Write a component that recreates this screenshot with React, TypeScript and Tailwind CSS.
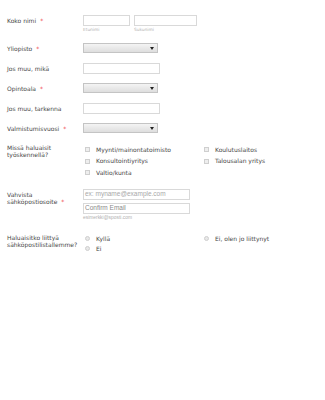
import React from 'react';

const font = { fontFamily: '"DejaVu Sans", Verdana, sans-serif' };

const Req = () => <span className="ml-[4px] text-[6px] text-[#f0424a]">*</span>;

const Label = ({ children, req }: { children: React.ReactNode; req?: boolean }) => (
  <div className="w-[76px] shrink-0 text-[6px] leading-[6.5px] text-[#474747]">
    {children}
    {req && <Req />}
  </div>
);

const TextBox = ({ w, placeholder, dark }: { w: string; placeholder?: string; dark?: boolean }) => (
  <div
    className={`${w} h-[11px] border border-[#d9d9d9] bg-white flex items-center pl-[1px] text-[6.5px] leading-none ${dark ? 'text-[#8a8a8a]' : 'text-[#a8a8a8]'}`}
    style={{ fontFamily: '"Liberation Sans", Arial, sans-serif' }}
  >
    {placeholder}
  </div>
);

const SelectBox = () => (
  <div className="w-[75px] h-[10px] border border-[#c4c4c4] bg-gradient-to-b from-[#f4f4f4] to-[#dedede] flex items-center justify-end pr-[3px]">
    <svg width="4" height="3" viewBox="0 0 4 3">
      <path d="M0 0h4L2 3z" fill="#222" />
    </svg>
  </div>
);

const Check = ({ label }: { label: string }) => (
  <div className="h-[11.5px] flex items-center">
    <div className="w-[5px] h-[5px] border border-[#cfcfcf] bg-[#eeeeee] shrink-0" />
    <span className="ml-[6px] text-[6px] leading-none text-[#474747]">{label}</span>
  </div>
);

const Radio = ({ label }: { label: string }) => (
  <div className="h-[10px] flex items-center">
    <div className="w-[5px] h-[5px] rounded-full border border-[#cfcfcf] bg-[#e8e8e8] shrink-0" />
    <span className="ml-[6px] text-[6px] leading-none text-[#474747]">{label}</span>
  </div>
);

export default function App() {
  return (
    <div className="w-[325px] h-[400px] bg-white pl-[7px] pt-[15px]" style={font}>
      {/* Koko nimi */}
      <div className="flex">
        <div className="w-[76px] shrink-0 h-[11px] flex items-center text-[6px] text-[#474747]">
          Koko nimi<Req />
        </div>
        <div className="flex gap-[4px]">
          <div>
            <TextBox w="w-[47px]" />
            <div className="mt-[1px] text-[4.3px] leading-[5px] text-[#b0b0b0]">Etunimi</div>
          </div>
          <div>
            <TextBox w="w-[63px]" />
            <div className="mt-[1px] text-[4.3px] leading-[5px] text-[#b0b0b0]">Sukunimi</div>
          </div>
        </div>
      </div>

      {/* select / text rows */}
      <div className="mt-[11px]">
        {[
          { l: 'Yliopisto', req: true, sel: true },
          { l: 'Jos muu, mikä', sel: false },
          { l: 'Opintoala', req: true, sel: true },
          { l: 'Jos muu, tarkenna', sel: false },
          { l: 'Valmistumisvuosi', req: true, sel: true },
        ].map((r) => (
          <div key={r.l} className="h-[20px] flex items-start">
            <div className="w-[76px] shrink-0 h-[10px] flex items-center text-[6px] text-[#474747]">
              {r.l}
              {r.req && <Req />}
            </div>
            {r.sel ? <SelectBox /> : <TextBox w="w-[77px]" />}
          </div>
        ))}
      </div>

      {/* checkboxes */}
      <div className="flex mt-[1px]">
        <div className="pt-[1px]">
          <Label>
            Missä haluaisit
            <br />
            työskennellä?
          </Label>
        </div>
        <div className="grid grid-cols-[119px_119px] pl-[2px]">
          <div>
            <Check label="Myynti/mainontatoimisto" />
            <Check label="Konsultointiyritys" />
            <Check label="Valtio/kunta" />
          </div>
          <div>
            <Check label="Koulutuslaitos" />
            <Check label="Talousalan yritys" />
          </div>
        </div>
      </div>

      {/* email */}
      <div className="flex mt-[10px]">
        <div className="pt-[2px]">
          <div className="w-[76px] text-[6px] leading-[7px] text-[#474747]">
            Vahvista
            <br />
            sähköpostiosoite
            <Req />
          </div>
        </div>
        <div>
          <TextBox w="w-[107px]" placeholder="ex: myname@example.com" />
          <div className="mt-[3px]">
            <TextBox w="w-[107px]" placeholder="Confirm Email" dark />
          </div>
          <div
            className="mt-[1px] text-[4.9px] leading-[5px] text-[#b0b0b0]"
            style={{ fontFamily: '"Liberation Sans", Arial, sans-serif' }}
          >
            esimerkki@sposti.com
          </div>
        </div>
      </div>

      {/* radios */}
      <div className="flex mt-[14px]">
        <div>
          <div className="w-[76px] text-[6px] leading-[7px] text-[#474747]">
            Haluaisitko liittyä
            <br />
            sähköpostilistallemme?
          </div>
        </div>
        <div className="grid grid-cols-[119px_119px] pl-[2px]">
          <div>
            <Radio label="Kyllä" />
            <Radio label="Ei" />
          </div>
          <div>
            <Radio label="Ei, olen jo liittynyt" />
          </div>
        </div>
      </div>
    </div>
  );
}
